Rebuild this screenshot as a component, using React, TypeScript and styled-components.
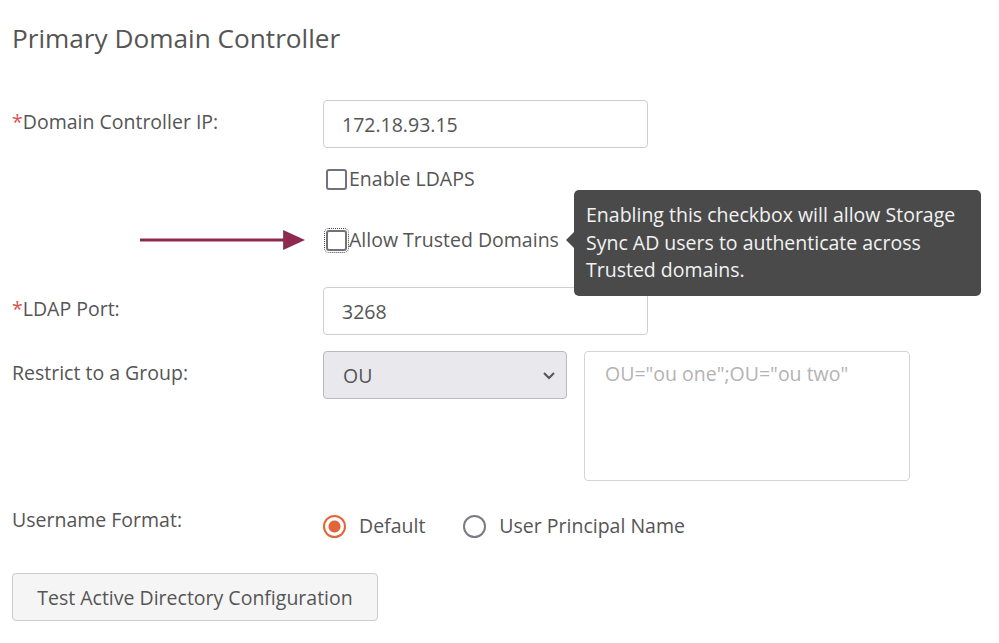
import React from 'react'
import styled, { createGlobalStyle } from 'styled-components'

const GlobalStyle = createGlobalStyle`
  body {
    margin: 0;
    background: #ffffff;
    font-family: 'Open Sans', 'Noto Sans', sans-serif;
    color: #555555;
  }
`

export default function App() {
  return (
    <Page>
      <GlobalStyle />
      <Title>Primary Domain Controller</Title>

      <Row gap={45}>
        <Label>
          <Required>*</Required>Domain Controller IP:
        </Label>
        <TextInput defaultValue="172.18.93.15" />
      </Row>

      <Row gap={19}>
        <span />
        <CheckRow>
          <Checkbox />
          <CheckText>Enable LDAPS</CheckText>
        </CheckRow>
      </Row>

      <Row gap={37}>
        <ArrowCell>
          <svg width="166" height="22" viewBox="0 0 166 22">
            <line x1="0" y1="11" x2="148" y2="11" stroke="#8c2b4e" strokeWidth="3" />
            <polygon points="144,1 166,11 144,21" fill="#8c2b4e" />
          </svg>
        </ArrowCell>
        <CheckRow>
          <Checkbox focused />
          <CheckText>Allow Trusted Domains</CheckText>
          <Tooltip>
            Enabling this checkbox will allow Storage Sync AD users to authenticate across
            Trusted domains.
          </Tooltip>
        </CheckRow>
      </Row>

      <Row gap={35}>
        <Label>
          <Required>*</Required>LDAP Port:
        </Label>
        <TextInput defaultValue="3268" />
      </Row>

      <Row gap={16}>
        <Label>Restrict to a Group:</Label>
        <GroupFields>
          <Select>
            <span>OU</span>
            <svg width="14" height="9" viewBox="0 0 14 9">
              <polyline points="2,2 7,7 12,2" fill="none" stroke="#555" strokeWidth="2" />
            </svg>
          </Select>
          <TextArea placeholder={'OU="ou one";OU="ou two"'} />
        </GroupFields>
      </Row>

      <Row gap={33}>
        <Label tight>Username Format:</Label>
        <RadioGroup>
          <RadioOption>
            <Radio checked />
            Default
          </RadioOption>
          <RadioOption>
            <Radio />
            User Principal Name
          </RadioOption>
        </RadioGroup>
      </Row>

      <Button>Test Active Directory Configuration</Button>
    </Page>
  )
}

const Page = styled.div`
  padding: 21px 12px 20px;
  display: flex;
  flex-direction: column;
  font-size: 19.5px;
`

const Title = styled.h1`
  margin: 0;
  font-size: 26.2px;
  line-height: 34px;
  font-weight: 400;
  color: #555555;
`

const Row = styled.div<{ gap: number }>`
  display: grid;
  grid-template-columns: 311px 1fr;
  align-items: start;
  margin-top: ${({ gap }) => gap}px;
`

const Label = styled.div<{ tight?: boolean }>`
  font-size: 19.5px;
  line-height: 24px;
  padding-top: ${({ tight }) => (tight ? '0' : '10px')};
  margin-top: ${({ tight }) => (tight ? '-6px' : '0')};
`

const Required = styled.span`
  color: #d9534f;
`

const TextInput = styled.input`
  box-sizing: border-box;
  width: 325px;
  height: 48px;
  border: 1px solid #cfcfcf;
  border-radius: 4px;
  padding: 0 18px;
  font-family: inherit;
  font-size: 19.5px;
  color: #555555;
  outline: none;
`

const CheckRow = styled.div`
  position: relative;
  display: flex;
  align-items: center;
  height: 24px;
  padding-left: 3px;
`

const Checkbox = styled.span<{ focused?: boolean }>`
  box-sizing: border-box;
  width: 21px;
  height: 21px;
  border: 2px solid #72727c;
  border-radius: 3px;
  margin-right: 2px;
  outline: ${({ focused }) => (focused ? '1px dotted #444' : 'none')};
  outline-offset: 1px;
`

const CheckText = styled.span`
  font-size: 19.5px;
  line-height: 24px;
`

const ArrowCell = styled.div`
  display: flex;
  justify-content: flex-end;
  align-items: center;
  height: 24px;
  padding-right: 18px;
  margin-left: 128px;
`

const Tooltip = styled.div`
  position: absolute;
  left: 251px;
  top: -38px;
  box-sizing: border-box;
  width: 407px;
  padding: 11px 12px 12px;
  background: #4a4a4a;
  border-radius: 5px;
  color: #f2f2f2;
  font-size: 19.5px;
  line-height: 27.5px;

  &::before {
    content: '';
    position: absolute;
    left: -8px;
    top: 42px;
    border-top: 8px solid transparent;
    border-bottom: 8px solid transparent;
    border-right: 8px solid #4a4a4a;
  }
`

const GroupFields = styled.div`
  display: flex;
  gap: 17px;
  align-items: flex-start;
`

const Select = styled.div`
  box-sizing: border-box;
  width: 244px;
  height: 48px;
  display: flex;
  align-items: center;
  justify-content: space-between;
  padding: 0 10px 0 19px;
  background: #e8e8ed;
  border: 1px solid #b8b8c0;
  border-radius: 4px;
  font-size: 19.5px;
  color: #555555;
`

const TextArea = styled.textarea`
  box-sizing: border-box;
  width: 326px;
  height: 130px;
  border: 1px solid #d4d4d4;
  border-radius: 4px;
  padding: 10px 20px;
  font-family: inherit;
  font-size: 19.5px;
  line-height: 24px;
  resize: none;
  outline: none;

  &::placeholder {
    color: #b3b3b3;
  }
`

const RadioGroup = styled.div`
  display: flex;
  align-items: center;
  gap: 38px;
  height: 24px;
`

const RadioOption = styled.label`
  display: flex;
  align-items: center;
  gap: 13px;
  font-size: 19.5px;
  line-height: 24px;
`

const Radio = styled.span<{ checked?: boolean }>`
  box-sizing: border-box;
  width: 23px;
  height: 23px;
  border-radius: 50%;
  border: 2px solid ${({ checked }) => (checked ? '#e2653a' : '#7a7a84')};
  background: ${({ checked }) =>
    checked ? 'radial-gradient(circle, #e2653a 0 5.5px, #fff 6.5px)' : '#fff'};
`

const Button = styled.button`
  align-self: flex-start;
  margin-top: 35px;
  box-sizing: border-box;
  width: 366px;
  height: 48px;
  background: #f5f5f5;
  border: 1px solid #cccccc;
  border-radius: 4px;
  font-family: inherit;
  font-size: 19.5px;
  color: #555555;
`
